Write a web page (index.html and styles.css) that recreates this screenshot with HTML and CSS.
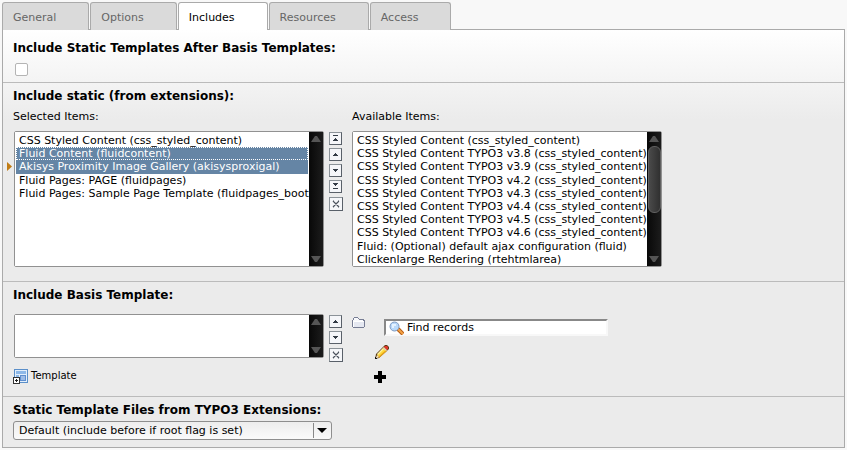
FILE: index.html
```html
<!DOCTYPE html>
<html lang="en">
<head>
<meta charset="utf-8">
<title>Template record</title>
<link rel="stylesheet" href="styles.css">
</head>
<body>
<svg class="sprite" aria-hidden="true">
  <symbol id="i-top" viewBox="0 0 11 11"><path d="M3 2h5v1H3zM5 5h1v1h1v1h1v1H3V7h1V6h1z"/></symbol>
  <symbol id="i-up" viewBox="0 0 11 11"><path d="M5 4h1v1h1v1h1v1H3V6h1V5h1z"/></symbol>
  <symbol id="i-down" viewBox="0 0 11 11"><path d="M3 4h5v1H7v1H6v1H5V6H4V5H3z"/></symbol>
  <symbol id="i-bottom" viewBox="0 0 11 11"><path d="M3 2h5v1H7v1H6v1H5V4H4V3H3zM3 7h5v1H3z"/></symbol>
  <symbol id="i-remove" viewBox="0 0 12 12"><path d="M3 3L9 9M9 3L3 9M3 3h1M8 3h1M3 9h1M8 9h1" fill="none" stroke="#4a515c" stroke-width="1.200" shape-rendering="auto"/></symbol>
  <symbol id="i-scroll" viewBox="0 0 14 14"><path d="M6 4h2l4 6H2z"/></symbol>
</svg>

<nav class="tabs">
  <button class="tab" type="button">General</button>
  <button class="tab" type="button">Options</button>
  <button class="tab tab-active" type="button">Includes</button>
  <button class="tab" type="button">Resources</button>
  <button class="tab" type="button">Access</button>
</nav>

<form class="panel">
  <section class="section section-first">
    <h2><label for="after">Include Static Templates After Basis Templates:</label></h2>
    <input class="check" type="checkbox" id="after">
  </section>

  <section class="section">
    <h2>Include static (from extensions):</h2>
    <div class="columns">
      <div class="column">
        <label class="caption" for="selected">Selected Items:</label>
        <div class="picker">
          <div class="list list-tall">
            <svg class="marker" viewBox="0 0 5 9" aria-hidden="true"><path d="M0 0L5 4.500L0 9z"/></svg>
            <select id="selected" multiple size="10">
              <option>CSS Styled Content (css_styled_content)</option>
              <option class="current" selected>Fluid Content (fluidcontent)</option>
              <option selected>Akisys Proximity Image Gallery (akisysproxigal)</option>
              <option>Fluid Pages: PAGE (fluidpages)</option>
              <option>Fluid Pages: Sample Page Template (fluidpages_bootstrap)</option>
            </select>
            <div class="track" aria-hidden="true">
              <svg><use href="#i-scroll"/></svg>
              <svg class="flip"><use href="#i-scroll"/></svg>
            </div>
          </div>
          <div class="moves">
            <button class="move" type="button" aria-label="Move to top"><svg><use href="#i-top"/></svg></button>
            <button class="move" type="button" aria-label="Move up"><svg><use href="#i-up"/></svg></button>
            <button class="move" type="button" aria-label="Move down"><svg><use href="#i-down"/></svg></button>
            <button class="move" type="button" aria-label="Move to bottom"><svg><use href="#i-bottom"/></svg></button>
            <button class="move move-remove" type="button" aria-label="Remove"><svg><use href="#i-remove"/></svg></button>
          </div>
        </div>
      </div>
      <div class="column">
        <label class="caption" for="available">Available Items:</label>
        <div class="list list-tall">
          <select id="available" multiple size="10">
            <option>CSS Styled Content (css_styled_content)</option>
            <option>CSS Styled Content TYPO3 v3.8 (css_styled_content)</option>
            <option>CSS Styled Content TYPO3 v3.9 (css_styled_content)</option>
            <option>CSS Styled Content TYPO3 v4.2 (css_styled_content)</option>
            <option>CSS Styled Content TYPO3 v4.3 (css_styled_content)</option>
            <option>CSS Styled Content TYPO3 v4.4 (css_styled_content)</option>
            <option>CSS Styled Content TYPO3 v4.5 (css_styled_content)</option>
            <option>CSS Styled Content TYPO3 v4.6 (css_styled_content)</option>
            <option>Fluid: (Optional) default ajax configuration (fluid)</option>
            <option>Clickenlarge Rendering (rtehtmlarea)</option>
          </select>
          <div class="track" aria-hidden="true">
            <svg><use href="#i-scroll"/></svg>
            <span class="thumb"></span>
            <svg class="flip"><use href="#i-scroll"/></svg>
          </div>
        </div>
      </div>
    </div>
  </section>

  <section class="section section-basis">
    <h2><label for="basis">Include Basis Template:</label></h2>
    <div class="columns">
      <div class="column">
        <div class="picker">
          <div class="list list-short">
            <select id="basis" multiple size="3"></select>
            <div class="track" aria-hidden="true">
              <svg><use href="#i-scroll"/></svg>
              <svg class="flip"><use href="#i-scroll"/></svg>
            </div>
          </div>
          <div class="moves">
            <button class="move" type="button" aria-label="Move up"><svg><use href="#i-up"/></svg></button>
            <button class="move" type="button" aria-label="Move down"><svg><use href="#i-down"/></svg></button>
            <button class="move move-remove" type="button" aria-label="Remove"><svg><use href="#i-remove"/></svg></button>
          </div>
        </div>
        <a class="template" href="#">
          <svg viewBox="0 0 15 15" aria-hidden="true">
            <path fill="#5b8fc9" d="M1 0h14v14H1z"/>
            <path fill="#e3effb" d="M2 1h12v12H2z"/>
            <path fill="#8db8e8" d="M3 2h10v3H3zM3 6h3v6H3z"/>
            <path fill="#5f8fd0" d="M7 6h6v6H7z"/>
            <path fill="#9dbce6" d="M8 7h4v4H8z"/>
            <path fill="#333" d="M0 8h7v7H0z"/>
            <path fill="#fff" d="M1 9h5v5H1z"/>
            <path fill="#222" d="M3 10h1v1h1v1H4v1H3v-1H2v-1h1z"/>
          </svg>
          <span>Template</span>
        </a>
      </div>
      <div class="tools">
        <button class="icon folder" type="button" aria-label="Browse records">
          <svg viewBox="0 0 13 11">
            <path fill="#777d94" d="M2 0h4v1h1v1h5v1h1v7h-1v1H1v-1H0V3h1V1h1z"/>
            <path fill="#f8f9fc" d="M2 1h4v1h1v1h4v1H1V3h1z"/>
            <path fill="#e5e8f1" d="M1 4h11v6H1z"/>
            <path fill="#fff" d="M1 4h11v1H2v5H1z"/>
          </svg>
        </button>
        <div class="actions">
          <div class="search">
            <svg viewBox="0 0 15 14" aria-hidden="true">
              <path stroke="#b65b13" stroke-width="4" d="M9 8l5 5"/>
              <path stroke="#f4a245" stroke-width="2" d="M9 8l5 5"/>
              <circle cx="5.500" cy="5.500" r="4.500" fill="#b9d9fa" stroke="#7e98bd"/>
              <path fill="#e4f2ff" d="M3 3h4v2H5v2H3z"/>
            </svg>
            <input type="text" aria-label="Find records" value="Find records">
          </div>
          <button class="icon pencil" type="button" aria-label="Edit">
            <svg viewBox="0 0 14 14">
              <path fill="#5a3d16" d="M10 0h2l2 2v2L4 13l-4 1 1-5z"/>
              <path fill="#ffd83a" d="M9 2l3 3-8 7-2-2z"/>
              <path fill="#fff2a0" d="M8 3l1 1-6 6-1-1z"/>
              <path fill="#e9a51c" d="M11 5l1 1-8 7-1-1z"/>
              <path fill="#d9cfc4" d="M9 2l3 3-1 1-3-3z"/>
              <path fill="#e0342b" d="M10 1h2l1 1v2l-1 1-3-3z"/>
              <path fill="#f5e3c4" d="M2 10l2 2-2 1H1z"/>
              <path fill="#111" d="M0 12h1v1h1v1H0z"/>
            </svg>
          </button>
          <button class="icon plus" type="button" aria-label="Add">
            <svg viewBox="0 0 12 12"><path d="M4 0h4v4h4v4H8v4H4V8H0V4h4z"/></svg>
          </button>
        </div>
      </div>
    </div>
  </section>

  <section class="section section-last">
    <h2><label for="static-files">Static Template Files from TYPO3 Extensions:</label></h2>
    <div class="dropdown">
      <select id="static-files">
        <option>Default (include before if root flag is set)</option>
      </select>
      <span class="arrow" aria-hidden="true"></span>
    </div>
  </section>
</form>
</body>
</html>
```

FILE: styles.css
```css
* { box-sizing: border-box; }

body {
  margin: 0;
  padding: 2px;
  background: #f8f8f8;
  color: #000;
  font: 11px/14px "DejaVu Sans", Verdana, sans-serif;
}

button, input, select { font: inherit; color: inherit; margin: 0; }
svg { display: block; shape-rendering: crispEdges; }
.sprite { position: absolute; width: 0; height: 0; }

.tabs { display: flex; gap: 1px; }
.tab {
  height: 28px;
  padding: 2px 32px 0 10px;
  border: 1px solid #aaa;
  border-bottom: 0;
  border-radius: 3px 3px 0 0;
  background: #dadada;
  color: #666;
}
.tab-active { background: #fff; color: #000; position: relative; }

.panel {
  margin: -1px 0 0;
  border: 1px solid #aaa;
  background: #ebebeb linear-gradient(#fff, #ebebeb) no-repeat 0 0 / 100% 90px;
}

.section { padding: 6px 10px 14px; border-bottom: 1px solid #bbb; }
.section-first { padding: 11px 10px 6px; }
.section-basis { padding-bottom: 12px; }
.section-last { padding-bottom: 7px; border-bottom: 0; }

h2 { margin: 0; font-size: 12px; font-weight: bold; }

.check {
  appearance: none;
  display: block;
  width: 13px;
  height: 13px;
  margin: 8px 2px 0;
  border: 1px solid #b4b4b4;
  border-radius: 2px;
  background: #fff;
}

.columns { display: flex; gap: 9px; }
.caption { display: block; margin: 7px 0; }
.picker { display: flex; gap: 5px; padding-left: 1px; }

.list {
  position: relative;
  display: flex;
  width: 310px;
  border: 1px solid #919191;
  border-radius: 2px;
  background: #fff;
}
.list-tall { height: 136px; }
.list-short { height: 44px; }
.list select {
  flex: 1;
  min-width: 0;
  padding: 2px 1px 0;
  border: 0;
  border-radius: 0;
  outline: 0;
  background: #fff;
  overflow: hidden;
}
.list option { padding: 0 3px; line-height: normal; }
.list option:checked {
  background: #6585a5 linear-gradient(#6585a5, #6585a5);
  color: #fff !important;
  -webkit-text-fill-color: #fff;
}
.list option.current { outline: 1px dotted #fff; outline-offset: -1px; }

.marker { position: absolute; left: -8px; top: 30px; width: 5px; height: 9px; fill: #c17c14; shape-rendering: auto; }

.track {
  display: flex;
  flex-direction: column;
  width: 14px;
  background: linear-gradient(90deg, #080808, #1c1c1c);
}
.track svg { width: 14px; height: 14px; fill: #555; shape-rendering: auto; }
.track .flip { margin-top: auto; transform: rotate(180deg); }
.thumb {
  height: 67px;
  margin-left: 1px;
  border: 1px solid #606060;
  border-radius: 6px;
  background: linear-gradient(90deg, #4a4a4a, #303030);
}

.moves { display: flex; flex-direction: column; gap: 3px; padding-top: 1px; width: 14px; }
.move {
  width: 13px;
  height: 13px;
  padding: 0;
  border: 1px solid #8b9298;
  border-right-color: #596069;
  border-bottom-color: #596069;
  background: #f5f6f9;
}
.move svg { width: 11px; height: 11px; fill: #333b45; }
.move-remove { width: 14px; height: 14px; margin-top: 1px; }
.move-remove svg { width: 12px; height: 12px; }

.section-basis h2 { margin-bottom: 12px; }
.template {
  display: flex;
  gap: 3px;
  margin-top: 7px;
  color: #000;
  font-size: 10px;
  line-height: 14px;
  text-decoration: none;
}
.template svg { width: 15px; height: 15px; }

.tools { display: flex; gap: 9px; }
.icon { display: block; padding: 0; border: 0; background: none; }
.folder { align-self: flex-start; margin-top: 3px; }
.folder svg { width: 13px; height: 11px; }
.actions { display: flex; flex-direction: column; align-items: flex-start; }
.search { position: relative; margin: 5px 0 0 10px; }
.search svg { position: absolute; left: 5px; top: 2px; width: 15px; height: 14px; shape-rendering: auto; }
.search input {
  display: block;
  width: 224px;
  height: 17px;
  padding: 0 0 0 21px;
  border: 2px solid #888;
  border-right-color: #f8f8f8;
  border-bottom-color: #f8f8f8;
  border-radius: 0;
  background: #fff;
}
.pencil { margin: 9px 0 0 1px; }
.pencil svg { width: 14px; height: 14px; shape-rendering: auto; }
.plus { margin-top: 12px; }
.plus svg { width: 12px; height: 12px; }

.dropdown { position: relative; width: 319px; margin-top: 4px; }
.dropdown select {
  appearance: none;
  display: block;
  width: 100%;
  height: 19px;
  padding: 0 20px 0 5px;
  border: 1px solid #8e8e8e;
  border-radius: 3px;
  background: linear-gradient(#ededed, #fafafa);
}
.arrow {
  position: absolute;
  top: 2px;
  right: 3px;
  width: 16px;
  height: 15px;
  border-left: 1px solid #888;
  pointer-events: none;
}
.arrow::after {
  content: "";
  position: absolute;
  left: 3px;
  top: 5px;
  border: 5px solid transparent;
  border-top-color: #000;
  border-bottom: 0;
}
```
